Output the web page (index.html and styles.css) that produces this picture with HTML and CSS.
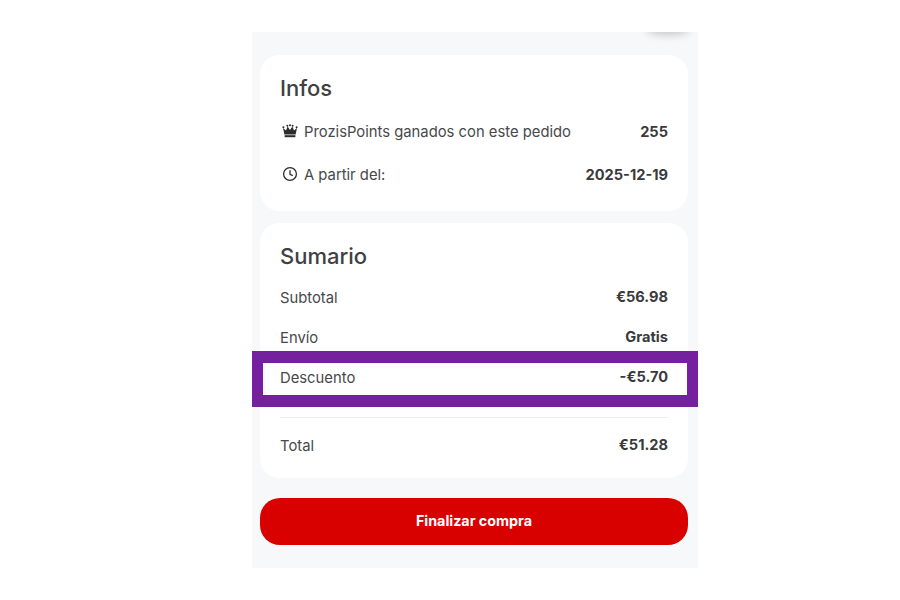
FILE: index.html
```html
<!DOCTYPE html>
<html lang="es">
<head>
    <meta charset="UTF-8">
    <meta name="viewport" content="width=device-width, initial-scale=1.0">
    <title>Checkout</title>
    <link rel="stylesheet" href="styles.css">
</head>
<body>
    <main class="panel">
        <div class="blob"></div>

        <section class="card infos">
            <h2>Infos</h2>
            <div class="row row-info">
                <span class="label">
                    <svg class="icon" viewBox="0 0 16 16" width="16" height="16">
                        <path d="M1 5l3 2.5L5.6 3.6 8 7 10.4 3.6 12 7.5 15 5l-1.4 6.6H2.4z" fill="#2c2c2c"/>
                        <circle cx="1.4" cy="4.2" r="1" fill="#2c2c2c"/>
                        <circle cx="5.4" cy="2.8" r="1" fill="#2c2c2c"/>
                        <circle cx="8" cy="2.2" r="1" fill="#2c2c2c"/>
                        <circle cx="10.6" cy="2.8" r="1" fill="#2c2c2c"/>
                        <circle cx="14.6" cy="4.2" r="1" fill="#2c2c2c"/>
                        <rect x="2.6" y="12.2" width="10.8" height="2" fill="#2c2c2c"/>
                    </svg>
                    ProzisPoints ganados con este pedido
                </span>
                <strong>255</strong>
            </div>
            <div class="row row-info">
                <span class="label">
                    <svg class="icon" viewBox="0 0 16 16" width="16" height="16">
                        <circle cx="8" cy="8" r="6.4" fill="none" stroke="#2c2c2c" stroke-width="1.3"/>
                        <path d="M8 4.2V8.4l2.8 1.2" fill="none" stroke="#2c2c2c" stroke-width="1.3"/>
                    </svg>
                    A partir del:
                </span>
                <strong>2025-12-19</strong>
            </div>
        </section>

        <section class="card summary">
            <h2>Sumario</h2>
            <div class="row"><span>Subtotal</span><strong>€56.98</strong></div>
            <div class="row"><span>Envío</span><strong>Gratis</strong></div>
            <div class="row"><span>Descuento</span><strong>-€5.70</strong></div>
            <hr>
            <div class="row"><span>Total</span><strong>€51.28</strong></div>
        </section>

        <button class="buy" type="button">Finalizar compra</button>

        <!-- recuadro de anotacion sobre la fila de descuento -->
        <div class="highlight"></div>
    </main>
</body>
</html>
```

FILE: styles.css
```css
body {
    margin: 0;
    background-color: #fff;
    font-family: Inter, "Open Sans", sans-serif;
    color: #48484a;
}

.panel {
    position: relative;
    box-sizing: border-box;
    width: 446px;
    height: 536px;
    margin: 32px 0 0 252px;
    padding: 23px 10px 0 8px;
    background-color: #f7f8f9;
    overflow: hidden;
}

.blob {
    position: absolute;
    top: -14px;
    right: 8px;
    width: 44px;
    height: 14px;
    border-radius: 50%;
    box-shadow: 0 3px 8px rgba(0, 0, 0, 0.2);
}

.card {
    box-sizing: border-box;
    background: #fff;
    border-radius: 20px;
    padding: 19px 20px 0;
}

.infos {
    height: 156px;
    margin-bottom: 12px;
}

.summary {
    height: 255px;
    margin-bottom: 20px;
}

h2 {
    margin: 0 0 14px;
    font-size: 22px;
    line-height: 28px;
    font-weight: 500;
    color: #404042;
}

.row {
    display: flex;
    justify-content: space-between;
    align-items: center;
    height: 24px;
    margin-bottom: 16px;
    font-size: 14.8px;
}

.row span {
    padding-top: 4px;
}

.row strong {
    padding-top: 2px;
    font-size: 14.6px;
    font-weight: 700;
    color: #3a3a3c;
}

.row-info {
    height: 28px;
    margin-bottom: 15px;
}

.row-info strong {
    padding-top: 4px;
}

.label {
    display: flex;
    align-items: center;
    gap: 6px;
    padding-left: 2px;
}

.icon {
    flex: none;
    margin-top: -2px;
}

hr {
    border: 0;
    border-top: 1px solid #eeeeef;
    margin: 29px 0 14px;
}

.buy {
    display: block;
    width: 100%;
    height: 47px;
    border: 0;
    border-radius: 20px;
    background-color: #d90000;
    color: #fff;
    font-family: inherit;
    font-size: 14.3px;
    font-weight: 700;
    padding-bottom: 4px;
}

.highlight {
    position: absolute;
    top: 319px;
    left: 0;
    right: 0;
    height: 32px;
    border: solid #75209f;
    border-width: 12px 11px;
}
```
